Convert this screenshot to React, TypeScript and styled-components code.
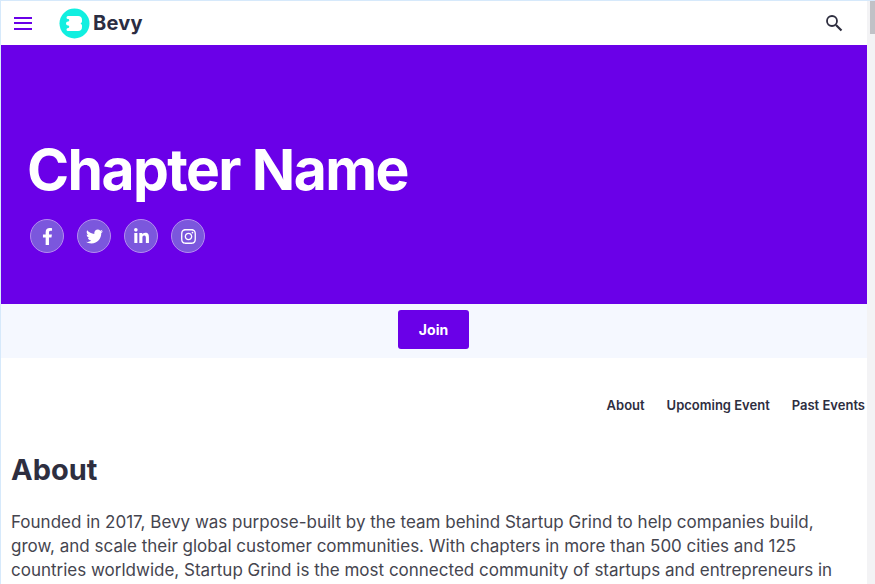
import React from "react";
import styled, { createGlobalStyle } from "styled-components";
import { FaFacebookF, FaTwitter, FaLinkedinIn, FaInstagram } from "react-icons/fa";

const GlobalStyle = createGlobalStyle`
  html, body {
    margin: 0;
    padding: 0;
    width: 875px;
    height: 584px;
    overflow: hidden;
    background: #fff;
  }
  * {
    box-sizing: border-box;
  }
`;

const Frame = styled.div`
  width: 875px;
  height: 584px;
  display: flex;
  overflow: hidden;
  border-top: 1px solid #d6e9fb;
  border-left: 1px solid #d6e9fb;
  font-family: Inter, "Liberation Sans", sans-serif;
  color: #2e2e3f;
`;

const Page = styled.div`
  width: 866px;
  flex: none;
`;

const ScrollTrack = styled.div`
  width: 8px;
  flex: none;
  background: #f3f3f5;
`;

const ScrollThumb = styled.div`
  width: 5px;
  height: 33px;
  margin-left: 3px;
  background: #c1c1c6;
`;

const Header = styled.header`
  height: 44px;
  display: flex;
  align-items: center;
  padding: 0 24px 0 13px;
  background: #fff;
`;

const Burger = styled.button`
  width: 18px;
  height: 13px;
  padding: 0;
  border: 0;
  background: none;
  display: flex;
  flex-direction: column;
  justify-content: space-between;
  margin-right: 27px;
`;

const BurgerLine = styled.span`
  display: block;
  height: 2px;
  background: #6a00e8;
`;

const Brand = styled.div`
  display: flex;
  align-items: center;
  gap: 3px;
  font-size: 20px;
  font-weight: 700;
  letter-spacing: 0.2px;
  color: #2b2d42;
`;

const SearchButton = styled.button`
  margin-left: auto;
  padding: 0;
  border: 0;
  background: none;
  display: flex;
`;

const Hero = styled.section`
  height: 259px;
  background: #6a00e8;
  padding: 93px 26px 0;
`;

const Title = styled.h1`
  margin: 0;
  font-size: 57px;
  line-height: 64px;
  font-weight: 700;
  letter-spacing: -1.6px;
  color: #fff;
`;

const Socials = styled.div`
  display: flex;
  gap: 13px;
  margin-top: 17px;
  padding-left: 3px;
`;

const SocialLink = styled.a`
  width: 34px;
  height: 34px;
  border-radius: 50%;
  display: flex;
  align-items: center;
  justify-content: center;
  background: #7b57dd;
  border: 1px solid #b48cf0;
  color: #fff;
  font-size: 17px;
`;

const JoinBar = styled.div`
  height: 54px;
  background: #f5f8ff;
  display: flex;
  justify-content: center;
  padding-top: 6px;
`;

const JoinButton = styled.button`
  width: 71px;
  height: 39px;
  margin-right: 1px;
  border: 0;
  border-radius: 3px;
  background: #6a00e8;
  color: #fff;
  font-family: inherit;
  font-size: 14px;
  font-weight: 700;
`;

const Tabs = styled.nav`
  display: flex;
  justify-content: flex-end;
  gap: 22px;
  padding: 39px 2px 0 0;
`;

const Tab = styled.a`
  font-size: 13px;
  line-height: 16px;
  font-weight: 600;
  color: #2e2e3f;
`;

const Content = styled.section`
  padding: 0 10px;
`;

const Heading = styled.h2`
  margin: 38px 0 0;
  font-size: 29px;
  line-height: 38px;
  font-weight: 700;
  color: #2e2e3f;
`;

const Body = styled.p`
  margin: 21px 0 0;
  font-size: 17px;
  line-height: 24px;
  color: #45454f;
`;

function BevyLogo() {
  return (
    <svg width="31" height="31" viewBox="0 0 31 31">
      <circle cx="15.5" cy="15.5" r="15" fill="#11efe0" />
      <path
        d="M9 8h10a4 4 0 0 1 4 4v1.5a3 3 0 0 1-1.5 2 3 3 0 0 1 1.5 2V19a4 4 0 0 1-4 4H9a1.5 1.5 0 0 1 0-3 1 1 0 0 0 0-2.5 2 2 0 0 1 0-4 1 1 0 0 0 0-2.5A1.5 1.5 0 0 1 9 8z"
        fill="#fff"
      />
    </svg>
  );
}

function SearchIcon() {
  return (
    <svg width="18" height="18" viewBox="0 0 18 18" fill="none" stroke="#2e2e3f">
      <circle cx="7" cy="7" r="5" strokeWidth="1.8" />
      <path d="M11 11l5.5 5.5" strokeWidth="2.2" />
    </svg>
  );
}

export default function App() {
  return (
    <Frame>
      <GlobalStyle />
      <Page>
        <Header>
          <Burger>
            <BurgerLine />
            <BurgerLine />
            <BurgerLine />
          </Burger>
          <Brand>
            <BevyLogo />
            Bevy
          </Brand>
          <SearchButton>
            <SearchIcon />
          </SearchButton>
        </Header>
        <Hero>
          <Title>Chapter Name</Title>
          <Socials>
            <SocialLink><FaFacebookF /></SocialLink>
            <SocialLink><FaTwitter /></SocialLink>
            <SocialLink><FaLinkedinIn /></SocialLink>
            <SocialLink><FaInstagram /></SocialLink>
          </Socials>
        </Hero>
        <JoinBar>
          <JoinButton>Join</JoinButton>
        </JoinBar>
        <Tabs>
          <Tab>About</Tab>
          <Tab>Upcoming Event</Tab>
          <Tab>Past Events</Tab>
        </Tabs>
        <Content>
          <Heading>About</Heading>
          <Body>
            Founded in 2017, Bevy was purpose-built by the team behind Startup Grind to help companies build,
            grow, and scale their global customer communities. With chapters in more than 500 cities and 125
            countries worldwide, Startup Grind is the most connected community of startups and entrepreneurs in
          </Body>
        </Content>
      </Page>
      <ScrollTrack>
        <ScrollThumb />
      </ScrollTrack>
    </Frame>
  );
}
